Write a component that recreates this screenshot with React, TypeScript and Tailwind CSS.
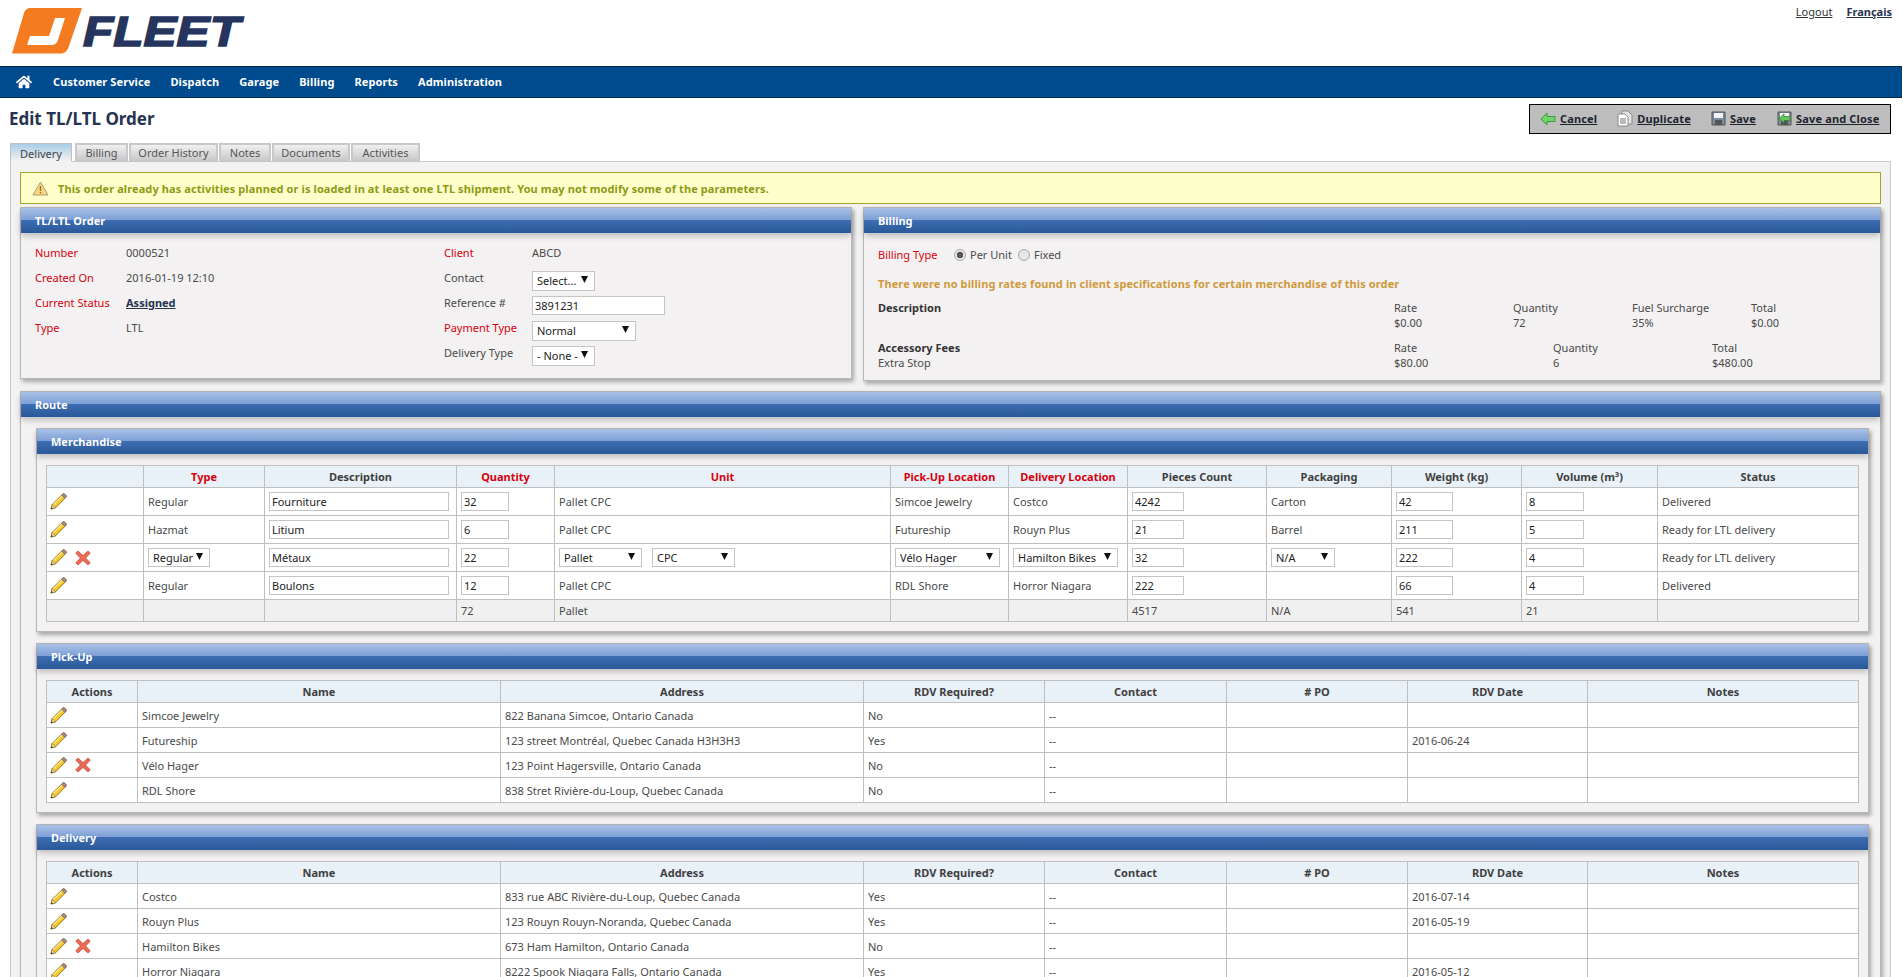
import { ReactNode } from 'react';
import { FaHome } from 'react-icons/fa';

const NAV = ['Customer Service', 'Dispatch', 'Garage', 'Billing', 'Reports', 'Administration'];
const TABS = [
  { label: 'Billing', width: 'w-[53px]' },
  { label: 'Order History', width: 'w-[89px]' },
  { label: 'Notes', width: 'w-[52px]' },
  { label: 'Documents', width: 'w-[78px]' },
  { label: 'Activities', width: 'w-[69px]' },
];

const th = 'border border-[#bfbfbf] bg-[#e8f0f8] h-[22px] p-0 text-center font-bold text-[#3f3f3f]';
const thRed = 'border border-[#bfbfbf] bg-[#e8f0f8] h-[22px] p-0 text-center font-bold text-[#d9000d]';
const td = 'border border-[#bfbfbf] bg-white px-[4px] py-0 text-[#4a4a4a] align-middle';
const tdFoot = 'border border-[#bfbfbf] bg-[#f0f0f0] px-[4px] py-0 text-[#4a4a4a] h-[22px]';
const radio = 'h-[12px] w-[12px] appearance-none rounded-full border border-[#a8a8a8] bg-[#e6e6e6] checked:bg-[radial-gradient(circle,#555_0,#555_3px,#e6e6e6_3.5px)]';

function Pencil() {
  return (
    <svg width="17" height="17" viewBox="0 0 17 17" className="block shrink-0">
      <path d="M1 16l1.2-4.6L12.6 1.2c.6-.6 1.5-.6 2.1 0l1.1 1.1c.6.6.6 1.5 0 2.1L5.6 14.8z" fill="#f6c82b" stroke="#8a6a18" strokeWidth="0.9" />
      <path d="M3.4 11.6L13.4 1.8" stroke="#fff0a0" strokeWidth="1.1" />
      <path d="M12.6 1.2c.6-.6 1.5-.6 2.1 0l1.1 1.1c.6.6.6 1.5 0 2.1l-1 1-3.2-3.2z" fill="#a98a8a" stroke="#6e5a5a" strokeWidth="0.6" />
      <path d="M1 16l1.2-4.6 3.4 3.4z" fill="#f0d8a8" stroke="#8a6a18" strokeWidth="0.6" />
      <path d="M1 16l.5-2 1.5 1.5z" fill="#333" />
    </svg>
  );
}

function RemoveIcon() {
  return (
    <svg width="16" height="16" viewBox="0 0 16 16" className="block shrink-0">
      <path d="M3 1l5 4.6L13 1l2.2 2.2L10.6 8l4.6 4.8L13 15l-5-4.6L3 15 .8 12.8 5.4 8 .8 3.2z" fill="#ec6a55" stroke="#c9503e" strokeWidth="0.8" />
    </svg>
  );
}

function Actions({ remove }: { remove?: boolean }) {
  return (
    <div className="flex items-center gap-[8px] -ml-[1px]">
      <Pencil />
      {remove && <RemoveIcon />}
    </div>
  );
}

function Select({ value, className }: { value: string; className: string }) {
  return (
    <div className={`relative ${className}`}>
      <select defaultValue={value} className="block w-full h-full appearance-none border border-[#c4c4c4] bg-white pl-[4px] text-[11px] text-[#222] outline-none">
        <option>{value}</option>
      </select>
      <svg width="7" height="7" viewBox="0 0 7 7" className="absolute right-[7px] top-[5px] pointer-events-none">
        <path d="M0 0h7L3.5 7z" fill="#111" />
      </svg>
    </div>
  );
}

function Field({ value, className }: { value: string; className: string }) {
  return (
    <input
      defaultValue={value}
      className={`block h-[19px] border border-[#c4c4c4] bg-white px-[2px] text-[11px] text-[#222] outline-none ${className}`}
    />
  );
}

function Section({ title, className, children }: { title: string; className?: string; children: ReactNode }) {
  return (
    <section className={`border border-[#b8b8b8] bg-[#f3f1f2] shadow-[2px_3px_4px_rgba(0,0,0,0.3)] ${className ?? ''}`}>
      <div className="relative h-[25px] pl-[14px] leading-[25px] font-bold text-white bg-[linear-gradient(#a9c1e6_0%,#7d9fd6_48%,#3d6db2_50%,#2a5898_100%)] shadow-[0_3px_6px_rgba(0,0,0,0.22)]">
        {title}
      </div>
      {children}
    </section>
  );
}

function Merchandise() {
  return (
    <table className="w-[1812px] table-fixed border-collapse">
      <thead>
        <tr>
          <th className={`${th} w-[97px]`} />
          <th className={`${thRed} w-[121px]`}>Type</th>
          <th className={`${th} w-[192px]`}>Description</th>
          <th className={`${thRed} w-[98px]`}>Quantity</th>
          <th className={`${thRed} w-[336px]`}>Unit</th>
          <th className={`${thRed} w-[118px]`}>Pick-Up Location</th>
          <th className={`${thRed} w-[119px]`}>Delivery Location</th>
          <th className={`${th} w-[139px]`}>Pieces Count</th>
          <th className={`${th} w-[125px]`}>Packaging</th>
          <th className={`${th} w-[130px]`}>Weight (kg)</th>
          <th className={`${th} w-[136px]`}>Volume (m³)</th>
          <th className={`${th} w-[201px]`}>Status</th>
        </tr>
      </thead>
      <tbody>
        <tr className="h-[28px]">
          <td className={td}><Actions /></td>
          <td className={td}>Regular</td>
          <td className={td}><Field value="Fourniture" className="w-[180px]" /></td>
          <td className={td}><Field value="32" className="w-[48px]" /></td>
          <td className={td}>Pallet CPC</td>
          <td className={td}>Simcoe Jewelry</td>
          <td className={td}>Costco</td>
          <td className={td}><Field value="4242" className="w-[52px]" /></td>
          <td className={td}>Carton</td>
          <td className={td}><Field value="42" className="w-[57px]" /></td>
          <td className={td}><Field value="8" className="w-[58px]" /></td>
          <td className={td}>Delivered</td>
        </tr>
        <tr className="h-[28px]">
          <td className={td}><Actions /></td>
          <td className={td}>Hazmat</td>
          <td className={td}><Field value="Litium" className="w-[180px]" /></td>
          <td className={td}><Field value="6" className="w-[48px]" /></td>
          <td className={td}>Pallet CPC</td>
          <td className={td}>Futureship</td>
          <td className={td}>Rouyn Plus</td>
          <td className={td}><Field value="21" className="w-[52px]" /></td>
          <td className={td}>Barrel</td>
          <td className={td}><Field value="211" className="w-[57px]" /></td>
          <td className={td}><Field value="5" className="w-[58px]" /></td>
          <td className={td}>Ready for LTL delivery</td>
        </tr>
        <tr className="h-[28px]">
          <td className={td}><Actions remove /></td>
          <td className={td}><Select value="Regular" className="w-[62px] h-[19px]" /></td>
          <td className={td}><Field value="Métaux" className="w-[180px]" /></td>
          <td className={td}><Field value="22" className="w-[48px]" /></td>
          <td className={td}>
            <div className="flex gap-[10px]">
              <Select value="Pallet" className="w-[83px] h-[19px]" />
              <Select value="CPC" className="w-[83px] h-[19px]" />
            </div>
          </td>
          <td className={td}><Select value="Vélo Hager" className="w-[105px] h-[19px]" /></td>
          <td className={td}><Select value="Hamilton Bikes" className="w-[105px] h-[19px]" /></td>
          <td className={td}><Field value="32" className="w-[52px]" /></td>
          <td className={td}><Select value="N/A" className="w-[64px] h-[19px]" /></td>
          <td className={td}><Field value="222" className="w-[57px]" /></td>
          <td className={td}><Field value="4" className="w-[58px]" /></td>
          <td className={td}>Ready for LTL delivery</td>
        </tr>
        <tr className="h-[28px]">
          <td className={td}><Actions /></td>
          <td className={td}>Regular</td>
          <td className={td}><Field value="Boulons" className="w-[180px]" /></td>
          <td className={td}><Field value="12" className="w-[48px]" /></td>
          <td className={td}>Pallet CPC</td>
          <td className={td}>RDL Shore</td>
          <td className={td}>Horror Niagara</td>
          <td className={td}><Field value="222" className="w-[52px]" /></td>
          <td className={td} />
          <td className={td}><Field value="66" className="w-[57px]" /></td>
          <td className={td}><Field value="4" className="w-[58px]" /></td>
          <td className={td}>Delivered</td>
        </tr>
        <tr>
          <td className={tdFoot} />
          <td className={tdFoot} />
          <td className={tdFoot} />
          <td className={tdFoot}>72</td>
          <td className={tdFoot}>Pallet</td>
          <td className={tdFoot} />
          <td className={tdFoot} />
          <td className={tdFoot}>4517</td>
          <td className={tdFoot}>N/A</td>
          <td className={tdFoot}>541</td>
          <td className={tdFoot}>21</td>
          <td className={tdFoot} />
        </tr>
      </tbody>
    </table>
  );
}

type Stop = { name: string; address: string; rdv: string; date: string; remove?: boolean };

const PICKUPS: Stop[] = [
  { name: 'Simcoe Jewelry', address: '822 Banana Simcoe, Ontario Canada', rdv: 'No', date: '' },
  { name: 'Futureship', address: '123 street Montréal, Quebec Canada H3H3H3', rdv: 'Yes', date: '2016-06-24' },
  { name: 'Vélo Hager', address: '123 Point Hagersville, Ontario Canada', rdv: 'No', date: '', remove: true },
  { name: 'RDL Shore', address: '838 Stret Rivière-du-Loup, Quebec Canada', rdv: 'No', date: '' },
];

const DELIVERIES: Stop[] = [
  { name: 'Costco', address: '833 rue ABC Rivière-du-Loup, Quebec Canada', rdv: 'Yes', date: '2016-07-14' },
  { name: 'Rouyn Plus', address: '123 Rouyn Rouyn-Noranda, Quebec Canada', rdv: 'Yes', date: '2016-05-19' },
  { name: 'Hamilton Bikes', address: '673 Ham Hamilton, Ontario Canada', rdv: 'No', date: '', remove: true },
  { name: 'Horror Niagara', address: '8222 Spook Niagara Falls, Ontario Canada', rdv: 'Yes', date: '2016-05-12' },
];

function StopTable({ rows }: { rows: Stop[] }) {
  return (
    <table className="w-[1812px] table-fixed border-collapse">
      <thead>
        <tr>
          <th className={`${th} w-[91px]`}>Actions</th>
          <th className={`${th} w-[363px]`}>Name</th>
          <th className={`${th} w-[363px]`}>Address</th>
          <th className={`${th} w-[181px]`}>RDV Required?</th>
          <th className={`${th} w-[182px]`}>Contact</th>
          <th className={`${th} w-[181px]`}># PO</th>
          <th className={`${th} w-[180px]`}>RDV Date</th>
          <th className={`${th} w-[271px]`}>Notes</th>
        </tr>
      </thead>
      <tbody>
        {rows.map((row) => (
          <tr key={row.name} className="h-[25px]">
            <td className={td}><Actions remove={row.remove} /></td>
            <td className={td}>{row.name}</td>
            <td className={td}>{row.address}</td>
            <td className={td}>{row.rdv}</td>
            <td className={td}>--</td>
            <td className={td} />
            <td className={td}>{row.date}</td>
            <td className={td} />
          </tr>
        ))}
      </tbody>
    </table>
  );
}

export default function App() {
  return (
    <div className="h-[977px] w-[1903px] overflow-hidden bg-white font-['Noto_Sans',sans-serif] text-[11px] leading-[15px] text-[#4a4a4a]">
      {/* Header */}
      <header className="flex h-[66px] w-[1902px] justify-between">
        <div className="flex items-start pl-[12px] pt-[8px]">
          <svg width="72" height="46" viewBox="0 0 72 46" className="shrink-0">
            <path d="M0 45.500L12 5c1-3 3-5 7-5h51L57 38c-1.500 5-4 7.500-9 7.500z" fill="#f47b20" />
            <path d="M43 10h10l-7 22c-1 3-3 5-7 5H15l3-9h19z" fill="#fff" />
          </svg>
          <span className="mt-[1px] -ml-[1px] origin-left scale-x-[1.18] font-['Liberation_Sans',sans-serif] text-[42px] leading-[46px] font-bold italic text-[#26355e] [-webkit-text-stroke:1.5px_#26355e]">
            FLEET
          </span>
        </div>
        <div className="flex gap-[14px] pr-[10px] pt-[4px]">
          <a className="text-[#333] underline">Logout</a>
          <a className="font-bold text-[#26334f] underline">Français</a>
        </div>
      </header>

      {/* Nav */}
      <nav className="flex h-[32px] w-[1902px] items-center border-y border-[#06294f] bg-[#004b8d] pb-px pl-[16px] font-bold tracking-[0.1px] text-white">
        <FaHome className="mr-[21px] h-[16px] w-[16px]" />
        <div className="flex gap-[20px]">
          {NAV.map((item) => (
            <span key={item}>{item}</span>
          ))}
        </div>
      </nav>

      {/* Title + toolbar */}
      <div className="flex h-[45px] w-[1902px] items-start justify-between pl-[9px] pr-[11px] pt-[6px]">
        <h1 className="pt-[4px] text-[17px] leading-[22px] font-bold text-[#26334f]">Edit TL/LTL Order</h1>
        <div className="flex h-[30px] w-[362px] items-center border border-black bg-[#bdbdbd] pb-px pl-[10px] font-bold tracking-[0.15px] text-[#1d2430]">
          <svg width="16" height="14" viewBox="0 0 16 14" className="mr-[4px] shrink-0">
            <path d="M7 1L1 7l6 6V9.500h8v-5H7z" fill="#6fd46a" stroke="#3a9a3a" strokeWidth="1" />
          </svg>
          <a className="underline">Cancel</a>
          <svg width="16" height="17" viewBox="0 0 16 17" className="ml-[20px] mr-[4px] shrink-0">
            <path d="M5 1h6l4 4v9H5z" fill="#e4e4e4" stroke="#8a8a8a" />
            <path d="M1 4h7l3 3v9H1z" fill="#fff" stroke="#8a8a8a" />
            <path d="M3 9h6M3 11h6M3 13h6" stroke="#777" />
          </svg>
          <a className="underline">Duplicate</a>
          <svg width="15" height="15" viewBox="0 0 15 15" className="ml-[20px] mr-[4px] shrink-0">
            <path d="M1 1h13v13H1z" fill="#7d8ba0" stroke="#555" />
            <path d="M3 2h9v5H3z" fill="#f2f2f2" />
            <path d="M4 9h7v5H4z" fill="#555" />
          </svg>
          <a className="underline">Save</a>
          <svg width="15" height="15" viewBox="0 0 15 15" className="ml-[21px] mr-[4px] shrink-0">
            <path d="M1 1h13v13H1z" fill="#7d8ba0" stroke="#555" />
            <path d="M3 2h9v5H3z" fill="#f2f2f2" />
            <path d="M4 9h7v5H4z" fill="#555" />
            <path d="M7 3L2 7.500 7 12V9.500h6v-4H7z" fill="#5fc85a" stroke="#2f8a2f" strokeWidth="0.7" />
          </svg>
          <a className="underline">Save and Close</a>
        </div>
      </div>

      {/* Tabs */}
      <div className="relative z-10 -mb-px ml-[10px] flex h-[19px] items-stretch gap-px">
        <div className="mr-[2px] flex w-[62px] items-center justify-center border border-[#c0c0c0] border-b-[#f2f2f2] bg-[linear-gradient(#a9cde6,#f2f2f2)] pt-px text-[#444]">Delivery</div>
        {TABS.map((tab) => (
          <div key={tab.label} className={`flex items-center justify-center border-2 border-b-0 border-[#c8c8c8] bg-[linear-gradient(#f0f0f0,#c4c4c4)] pb-[2px] text-[#555] ${tab.width}`}>
            {tab.label}
          </div>
        ))}
      </div>

      {/* Tab panel */}
      <main className="ml-[10px] w-[1881px] border border-[#c8c8c8] bg-[#f2f2f2] px-[9px] pt-[10px]">
        <div className="flex h-[32px] items-center border border-[#a3a32e] bg-[#ffffcc] pl-[11px] font-bold tracking-[0.1px] text-[#8c9a14]">
          <svg width="17" height="15" viewBox="0 0 17 15" className="mr-[9px] shrink-0">
            <path d="M8.500 1L16 14H1z" fill="#f5d98a" stroke="#b89a6a" />
            <path d="M8.500 5v5M8.500 11v1.500" stroke="#a8741c" strokeWidth="1.500" />
          </svg>
          This order already has activities planned or is loaded in at least one LTL shipment. You may not modify some of the parameters.
        </div>

        <div className="mt-[3px] flex items-start gap-[11px]">
          <Section title="TL/LTL Order" className="h-[172px] w-[832px]">
            <div className="flex pl-[14px] pt-[7px]">
              <div className="grid w-[409px] grid-cols-[91px_1fr] auto-rows-[25px] items-center">
                <span className="text-[#d9000d]">Number</span><span>0000521</span>
                <span className="text-[#d9000d]">Created On</span><span>2016-01-19 12:10</span>
                <span className="text-[#d9000d]">Current Status</span><span className="font-bold text-[#26334f] underline">Assigned</span>
                <span className="text-[#d9000d]">Type</span><span>LTL</span>
              </div>
              <div className="grid grid-cols-[88px_1fr] auto-rows-[25px] items-center">
                <span className="text-[#d9000d]">Client</span><span>ABCD</span>
                <span>Contact</span><Select value="Select..." className="w-[63px] h-[20px] translate-y-[3px]" />
                <span>Reference #</span><Field value="3891231" className="w-[133px] translate-y-[3px]" />
                <span className="text-[#d9000d]">Payment Type</span><Select value="Normal" className="w-[104px] h-[20px] translate-y-[3px]" />
                <span>Delivery Type</span><Select value="- None -" className="w-[63px] h-[20px] translate-y-[3px]" />
              </div>
            </div>
          </Section>

          <Section title="Billing" className="h-[174px] w-[1018px]">
            <div className="pl-[14px] pt-[14px]">
              <div className="flex items-center">
                <span className="w-[76px] text-[#d9000d]">Billing Type</span>
                <input type="radio" name="billing" defaultChecked className={radio} />
                <span className="ml-[4px] w-[48px]">Per Unit</span>
                <input type="radio" name="billing" className={radio} />
                <span className="ml-[4px]">Fixed</span>
              </div>
              <p className="mt-[14px] font-bold tracking-[0.1px] text-[#cf9a3a]">There were no billing rates found in client specifications for certain merchandise of this order</p>
              <div className="mt-[9px] grid grid-cols-[516px_119px_119px_119px_1fr]">
                <span className="font-bold text-[#333]">Description</span><span>Rate</span><span>Quantity</span><span>Fuel Surcharge</span><span>Total</span>
                <span /><span>$0.00</span><span>72</span><span>35%</span><span>$0.00</span>
              </div>
              <div className="mt-[10px] grid grid-cols-[516px_159px_159px_1fr]">
                <span className="font-bold text-[#333]">Accessory Fees</span><span>Rate</span><span>Quantity</span><span>Total</span>
                <span>Extra Stop</span><span>$80.00</span><span>6</span><span>$480.00</span>
              </div>
            </div>
          </Section>
        </div>

        <Section title="Route" className="mt-[10px]">
          <div className="flex flex-col gap-[11px] pl-[15px] pr-[11px] pt-[11px]">
            <Section title="Merchandise">
              <div className="pb-[9px] pl-[9px] pt-[11px]"><Merchandise /></div>
            </Section>
            <Section title="Pick-Up">
              <div className="pb-[9px] pl-[9px] pt-[11px]"><StopTable rows={PICKUPS} /></div>
            </Section>
            <Section title="Delivery">
              <div className="pb-[9px] pl-[9px] pt-[11px]"><StopTable rows={DELIVERIES} /></div>
            </Section>
          </div>
        </Section>
      </main>
    </div>
  );
}
